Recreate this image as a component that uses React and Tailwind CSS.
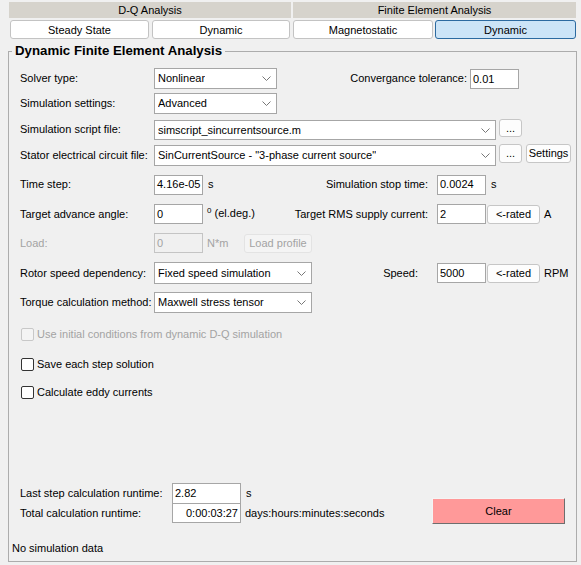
import React from "react";

const Chevron = () => (
  <svg width="9" height="5" viewBox="0 0 9 5" className="shrink-0">
    <polyline points="0.5,0.5 4.5,4.5 8.5,0.5" fill="none" stroke="#777" strokeWidth="1" />
  </svg>
);

const Select = ({ w, h, value }) => (
  <div className={`${w} ${h} shrink-0 bg-white border border-[#a6a6a6] flex items-center justify-between pl-[3px] pr-[5px]`}>
    <span className="truncate">{value}</span>
    <Chevron />
  </div>
);

const Field = ({ w, h, value, right, disabled }) => (
  <div
    className={`${w} ${h} shrink-0 border flex items-center px-[2px] overflow-hidden ${
      disabled ? "bg-[#f0f0f0] border-[#c4c4c4] text-[#a3a3a3]" : "bg-white border-[#a6a6a6]"
    } ${right ? "justify-end" : ""}`}
  >
    {value}
  </div>
);

const Btn = ({ w, h, children, disabled }) => (
  <div
    className={`${w} ${h} shrink-0 rounded-[3px] border flex items-center justify-center ${
      disabled ? "bg-[#f4f4f4] border-[#e3e3e3] text-[#a3a3a3]" : "bg-[#fdfdfd] border-[#c6c6c6]"
    }`}
  >
    {children}
  </div>
);

const Tab = ({ w, active, children }) => (
  <div
    className={`${w} h-[19px] rounded-[3px] border flex items-center justify-center pt-px ${
      active ? "bg-[#cce4f7] border-[#2c6aa0]" : "bg-white border-[#c3c3c3]"
    }`}
  >
    {children}
  </div>
);

const Check = ({ label, disabled }) => (
  <div className={`flex items-center h-[15px] ${disabled ? "text-[#a3a3a3]" : ""}`}>
    <div
      className={`ml-[1px] w-[13px] h-[13px] rounded-[2px] border ${
        disabled ? "border-[#c8c8c8] bg-[#f4f4f4]" : "border-[#333] bg-white"
      }`}
    />
    <span className="ml-[3px]">{label}</span>
  </div>
);

// label pushed against the control on its right; long text runs off to the left
const RightLabel = ({ w, children }) => (
  <div className={`${w} shrink-0 flex justify-end`}>
    <span className="shrink-0">{children}</span>
  </div>
);

export default function App() {
  return (
    <div className="w-[581px] h-[565px] overflow-hidden bg-[#f0f0f0] font-['Liberation_Sans',Arial,sans-serif] text-[11px] leading-[13px] text-black whitespace-nowrap">
      <div className="flex pt-[2px] pl-[9px] gap-[2px]">
        <div className="w-[282px] flex flex-col">
          <div className="h-[16px] pt-px bg-[#d6d3cc] flex items-center justify-center">D-Q Analysis</div>
          <div className="flex gap-[3px] pl-[1px] mt-[2px]">
            <Tab w="w-[139px]">Steady State</Tab>
            <Tab w="w-[138px]">Dynamic</Tab>
          </div>
        </div>
        <div className="w-[283px] flex flex-col">
          <div className="h-[16px] pt-px bg-[#d6d3cc] flex items-center justify-center">Finite Element Analysis</div>
          <div className="flex gap-[2px] mt-[2px]">
            <Tab w="w-[140px]">Magnetostatic</Tab>
            <Tab w="w-[141px]" active>
              Dynamic
            </Tab>
          </div>
        </div>
      </div>

      <fieldset className="ml-[8px] mt-[4px] w-[569px] h-[519px] border border-[#acacac] p-0 min-w-0">
        <legend className="ml-[3px] px-[3px] text-[13.25px] font-bold leading-[16px]">
          Dynamic Finite Element Analysis
        </legend>
        <div className="pl-[11px] flex flex-col">
          {/* solver */}
          <div className="mt-[8px] h-[22px] flex items-center">
            <span className="w-[134px] shrink-0">Solver type:</span>
            <Select w="w-[123px]" h="h-[21px]" value="Nonlinear" />
            <RightLabel w="w-[190px]">Convergance tolerance:</RightLabel>
            <div className="ml-[3px] self-start mt-[2px]">
              <Field w="w-[49px]" h="h-[20px]" value="0.01" />
            </div>
          </div>
          <div className="mt-[4px] h-[21px] flex items-center">
            <span className="w-[134px] shrink-0">Simulation settings:</span>
            <Select w="w-[123px]" h="h-[21px]" value="Advanced" />
          </div>
          <div className="mt-[5px] h-[21px] flex items-start">
            <span className="w-[134px] shrink-0 mt-[4px]">Simulation script file:</span>
            <div className="mt-[1px]">
              <Select w="w-[342px]" h="h-[20px]" value="simscript_sincurrentsource.m" />
            </div>
            <div className="ml-[3px]">
              <Btn w="w-[23px]" h="h-[18px]">...</Btn>
            </div>
          </div>
          <div className="mt-[4px] h-[22px] flex items-start">
            <span className="w-[134px] shrink-0 mt-[5px]">Stator electrical circuit file:</span>
            <div className="mt-[1px]">
              <Select w="w-[342px]" h="h-[21px]" value={'SinCurrentSource - "3-phase current source"'} />
            </div>
            <div className="ml-[3px]">
              <Btn w="w-[23px]" h="h-[19px]">...</Btn>
            </div>
            <div className="ml-[4px]">
              <Btn w="w-[45px]" h="h-[19px]">Settings</Btn>
            </div>
          </div>

          {/* time step */}
          <div className="mt-[8px] h-[21px] flex items-center">
            <div className="w-[280px] shrink-0 flex items-center">
              <span className="w-[134px] shrink-0">Time step:</span>
              <Field w="w-[49px]" h="h-[20px]" value="4.16e-05" />
              <span className="ml-[5px]">s</span>
            </div>
            <RightLabel w="w-[128px]">Simulation stop time:</RightLabel>
            <div className="ml-[9px]">
              <Field w="w-[49px]" h="h-[20px]" value="0.0024" />
            </div>
            <span className="ml-[5px]">s</span>
          </div>
          <div className="mt-[9px] h-[20px] flex items-center">
            <div className="w-[280px] shrink-0 flex items-center">
              <span className="w-[134px] shrink-0">Target advance angle:</span>
              <Field w="w-[49px]" h="h-[20px]" value="0" />
              <span className="ml-[4px]">
                <span className="text-[8px] relative -top-[4px]">0</span> (el.deg.)
              </span>
            </div>
            <RightLabel w="w-[128px]">Target RMS supply current:</RightLabel>
            <div className="ml-[9px]">
              <Field w="w-[49px]" h="h-[20px]" value="2" />
            </div>
            <div className="ml-[1px]">
              <Btn w="w-[53px]" h="h-[19px]">&lt;-rated</Btn>
            </div>
            <span className="ml-[4px]">A</span>
          </div>
          <div className="mt-[9px] h-[20px] flex items-center text-[#a3a3a3]">
            <span className="w-[134px] shrink-0">Load:</span>
            <Field w="w-[49px]" h="h-[20px]" value="0" disabled />
            <span className="ml-[4px] w-[37px] shrink-0">N*m</span>
            <Btn w="w-[68px]" h="h-[19px]" disabled>
              Load profile
            </Btn>
          </div>
          <div className="mt-[9px] h-[22px] flex items-center">
            <div className="w-[280px] shrink-0 flex items-center">
              <span className="w-[134px] shrink-0">Rotor speed dependency:</span>
              <Select w="w-[158px]" h="h-[22px]" value="Fixed speed simulation" />
            </div>
            <RightLabel w="w-[118px]">Speed:</RightLabel>
            <div className="ml-[19px]">
              <Field w="w-[49px]" h="h-[20px]" value="5000" />
            </div>
            <div className="ml-[1px]">
              <Btn w="w-[53px]" h="h-[19px]">&lt;-rated</Btn>
            </div>
            <span className="ml-[4px]">RPM</span>
          </div>
          <div className="mt-[7px] h-[22px] flex items-center">
            <span className="w-[134px] shrink-0">Torque calculation method:</span>
            <div className="mt-[1px]">
              <Select w="w-[158px]" h="h-[21px]" value="Maxwell stress tensor" />
            </div>
          </div>

          {/* checkboxes */}
          <div className="mt-[14px]">
            <Check label="Use initial conditions from dynamic D-Q simulation" disabled />
          </div>
          <div className="mt-[15px]">
            <Check label="Save each step solution" />
          </div>
          <div className="mt-[13px]">
            <Check label="Calculate eddy currents" />
          </div>

          {/* runtime */}
          <div className="mt-[83px] flex items-start">
            <div className="w-[412px] shrink-0 flex flex-col">
              <div className="h-[21px] flex items-center">
                <span className="w-[152px] shrink-0">Last step calculation runtime:</span>
                <Field w="w-[69px]" h="h-[21px]" value="2.82" />
                <span className="ml-[5px]">s</span>
              </div>
              <div className="-mt-px h-[20px] flex items-center">
                <span className="w-[152px] shrink-0">Total calculation runtime:</span>
                <Field w="w-[69px]" h="h-[20px]" value="0:00:03:27" right />
                <span className="ml-[4px]">days:hours:minutes:seconds</span>
              </div>
            </div>
            <div className="mt-[15px] w-[133px] h-[26px] bg-[#ff9999] border border-t-[#f4f4f4] border-l-[#f4f4f4] border-r-[#6e6e6e] border-b-[#6e6e6e] flex items-center justify-center">
              Clear
            </div>
          </div>

          <div className="-ml-[8px] mt-[18px]">No simulation data</div>
        </div>
      </fieldset>
    </div>
  );
}
